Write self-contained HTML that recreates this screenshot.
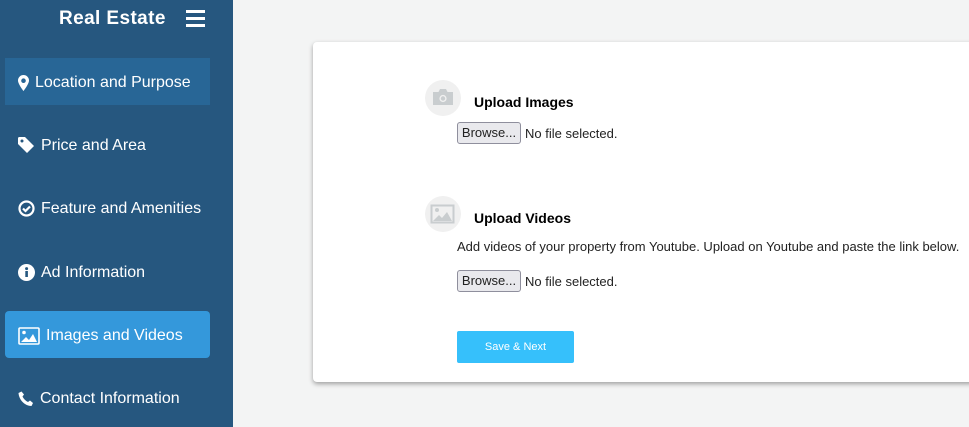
<!DOCTYPE html>
<html><head><style>
*{margin:0;padding:0;box-sizing:border-box}
body{width:969px;height:427px;overflow:hidden;background:#f3f4f4;font-family:"Liberation Sans",Arial,sans-serif;position:relative}
.sb{position:absolute;left:0;top:0;width:233px;height:427px;background:#26577f}
.title{position:absolute;left:59px;top:8px;color:#fff;font-weight:bold;font-size:19px;letter-spacing:0.4px}
.burger{position:absolute;left:186px;top:10px;width:19px}
.burger i{display:block;height:3px;background:#fff;margin-bottom:4px}
.item{position:absolute;left:5px;width:205px;height:47px;color:#fff;font-size:16px;display:flex;align-items:center;padding-left:13px;padding-top:2px;gap:6px}
.item svg{fill:#fff;flex:none}
.card{position:absolute;left:313px;top:42px;width:680px;height:340px;background:#fff;border-radius:4px;box-shadow:0 2px 5px rgba(0,0,0,.35)}
.circ{position:absolute;width:36px;height:36px;border-radius:50%;background:#f0f0f0}
.h{position:absolute;font-weight:bold;font-size:14px;color:#000}
.fb{position:absolute;font-size:13px;color:#222;display:flex;align-items:center}
.fb span.b{display:inline-block;border:1px solid #8f8f9d;border-radius:3px;background:#e9e9ed;width:64px;text-align:center;margin-right:4px;height:22px;line-height:20px}
.btn{position:absolute;left:144px;top:289px;width:117px;height:32px;background:#36c0fb;border-radius:2px;color:#fff;font-size:11px;text-align:center;line-height:32px}
</style></head><body>
<div class="sb">
<div class="title">Real Estate</div>
<div class="burger"><i></i><i></i><i></i></div>
<div class="item" style="top:58px;background:#286696;border-radius:0">
<svg width="11" height="16" viewBox="0 0 11 16"><path d="M5.5 0A5.5 5.5 0 0 0 0 5.5C0 9 5.5 16 5.5 16S11 9 11 5.5A5.5 5.5 0 0 0 5.5 0zm0 8a2.3 2.3 0 1 1 0-4.6 2.3 2.3 0 0 1 0 4.6z"/></svg>Location and Purpose</div>
<div class="item" style="top:121px"><svg width="17" height="17" viewBox="0 0 17 17"><path d="M0 1.5V7l9 9 7-7-9-9H1.5A1.5 1.5 0 0 0 0 1.5zM4 2.5a1.5 1.5 0 1 1 0 3 1.5 1.5 0 0 1 0-3z"/></svg>Price and Area</div>
<div class="item" style="top:184px"><svg width="17" height="17" viewBox="0 0 17 17"><circle cx="8.5" cy="8.5" r="7" fill="none" stroke="#fff" stroke-width="2.2"/><path d="M5 8.5l2.5 2.5 4.5-4.5" fill="none" stroke="#fff" stroke-width="2.2"/></svg>Feature and Amenities</div>
<div class="item" style="top:248px"><svg width="17" height="17" viewBox="0 0 17 17"><circle cx="8.5" cy="8.5" r="8.5"/><rect x="7.3" y="7" width="2.6" height="6" fill="#26577f"/><circle cx="8.6" cy="4.6" r="1.5" fill="#26577f"/></svg>Ad Information</div>
<div class="item" style="top:311px;background:#3498db;border-radius:4px;padding-left:13px"><svg width="22" height="18" viewBox="0 0 22 18"><rect x="1" y="1" width="20" height="16" rx="1" fill="none" stroke="#fff" stroke-width="1.6"/><circle cx="6" cy="5.5" r="1.8"/><path d="M3 15l5-5 3 3 4-6 4 8z"/></svg>Images and Videos</div>
<div class="item" style="top:374px"><svg width="16" height="16" viewBox="0 0 16 16"><path d="M3.5 0.5l2.5 3-1.5 2c1 2.2 3 4.3 5.5 5.5l2-1.5 3 2.5-1.5 3C7 15 1 9 0.5 2z"/></svg>Contact Information</div>
</div>
<div class="card">
<div class="circ" style="left:112px;top:38px"><svg width="36" height="36" viewBox="0 0 36 36"><path d="M8 12h5.5l1.5-3h6l1.5 3H28v13H8z" fill="#c9cdcf"/><circle cx="18" cy="18.5" r="3.6" fill="#f0f0f0"/><circle cx="18" cy="18.5" r="2.2" fill="#c9cdcf"/></svg></div>
<div class="h" style="left:161px;top:52px">Upload Images</div>
<div class="fb" style="left:144px;top:80px"><span class="b">Browse...</span>No file selected.</div>
<div class="circ" style="left:112px;top:154px"><svg width="36" height="36" viewBox="0 0 36 36"><rect x="6.5" y="9.5" width="22" height="17" fill="none" stroke="#c9cdcf" stroke-width="2"/><circle cx="12" cy="14" r="2" fill="#c9cdcf"/><path d="M8 25l6-6 3 3 5-6 5 9z" fill="#c9cdcf"/></svg></div>
<div class="h" style="left:161px;top:168px">Upload Videos</div>
<div style="position:absolute;left:144px;top:197px;font-size:13px;color:#222">Add videos of your property from Youtube. Upload on Youtube and paste the link below.</div>
<div class="fb" style="left:144px;top:228px"><span class="b">Browse...</span>No file selected.</div>
<div class="btn">Save &amp; Next</div>
</div>
</body></html>
